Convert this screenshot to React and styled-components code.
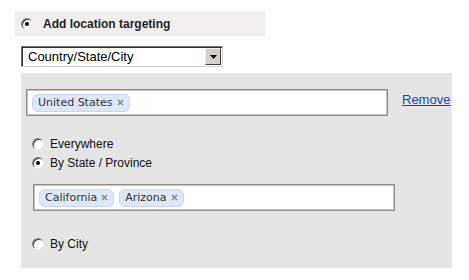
import React from 'react';
import styled, { createGlobalStyle } from 'styled-components';

const GlobalStyle = createGlobalStyle`
    body {
        margin: 0;
        background: #fff;
        font-family: 'Liberation Sans', Arial, sans-serif;
        color: #222;
    }
`;

const Page = styled.div`
    padding: 11px 0 0 15px;
`;

const HeaderBar = styled.div`
    width: 244px;
    height: 25px;
    padding-left: 6px;
    background: #f0efed;
    display: flex;
    align-items: center;
    gap: 10px;
    font-size: 12px;
    font-weight: bold;
    color: #1f1f2e;
`;

const RadioDot = styled.span`
    position: relative;
    flex: none;
    box-sizing: border-box;
    width: 12px;
    height: 12px;
    border-radius: 50%;
    background: #fff;
    border: 1px solid;
    border-color: #808080 #e8e8e8 #e8e8e8 #808080;
    box-shadow: inset 1px 1px 0 #404040;

    &::after {
        content: '';
        display: ${(p) => (p.checked ? 'block' : 'none')};
        position: absolute;
        left: 3px;
        top: 3px;
        width: 4px;
        height: 4px;
        border-radius: 50%;
        background: #000;
    }
`;

const Select = styled.div`
    margin: 10px 0 0 6px;
    width: 202px;
    height: 21px;
    box-sizing: border-box;
    background: #fff;
    border: 1px solid;
    border-color: #707070 #d4d0c8 #d4d0c8 #707070;
    box-shadow: inset 1px 1px 0 #303030;
    display: flex;
    align-items: center;
    justify-content: space-between;
    padding: 1px 1px 1px 6px;
    font-size: 13px;
    color: #000;
`;

const DropButton = styled.span`
    width: 16px;
    height: 17px;
    box-sizing: border-box;
    background: #d4d0c8;
    border: 1px solid;
    border-color: #f4f4f4 #404040 #404040 #f4f4f4;
    display: flex;
    align-items: center;
    justify-content: center;
`;

const Panel = styled.div`
    margin: 6px 0 0 6px;
    width: 431px;
    height: 195px;
    box-sizing: border-box;
    background: #e5e5e5;
    padding: 16px 0 0 5px;
`;

const TokenRow = styled.div`
    display: flex;
    align-items: flex-start;
    gap: 14px;
`;

const TokenBox = styled.div`
    width: 362px;
    height: 27px;
    box-sizing: border-box;
    background: #fff;
    border: 1px solid #8e8e8e;
    box-shadow: inset 0 0 0 1px #c4c4c4;
    display: flex;
    align-items: center;
    gap: 5px;
    padding-left: 5px;
    margin-left: ${(p) => p.indent || 0}px;
    margin-top: ${(p) => p.top || 0}px;
`;

const Tag = styled.span`
    height: 18px;
    box-sizing: border-box;
    display: inline-flex;
    align-items: center;
    gap: 4px;
    padding: 0 5px 0 5px;
    background: #dfe8f8;
    border: 1px solid #c8d6f1;
    border-radius: 6px;
    font-family: 'DejaVu Sans', Verdana, sans-serif;
    font-size: 11px;
    color: #333;
`;

const RemoveLink = styled.a`
    margin-top: 3px;
    font-size: 13px;
    color: #1a47b8;
    text-decoration: underline;
    cursor: pointer;
`;

const Options = styled.div`
    margin: 18px 0 0 6px;
`;

const OptionRow = styled.label`
    display: flex;
    align-items: center;
    gap: 6px;
    height: 19px;
    font-size: 12px;
    color: #111;
    margin-top: ${(p) => p.top || 0}px;
`;

const CloseIcon = () => (
    <svg width="7" height="7" viewBox="0 0 7 7">
        <path d="M1 1L6 6M6 1L1 6" stroke="#8a8a8a" strokeWidth="1.6" />
    </svg>
);

const ArrowIcon = () => (
    <svg width="7" height="4" viewBox="0 0 7 4">
        <path d="M0 0H7L3.5 4Z" fill="#000" />
    </svg>
);

const Option = ({ label, checked, top }) => (
    <OptionRow top={top}>
        <RadioDot checked={checked} />
        {label}
    </OptionRow>
);

const TagItem = ({ label }) => (
    <Tag>
        {label}
        <CloseIcon />
    </Tag>
);

export default function App() {
    return (
        <Page>
            <GlobalStyle />
            <HeaderBar>
                <RadioDot checked />
                Add location targeting
            </HeaderBar>

            <Select>
                Country/State/City
                <DropButton>
                    <ArrowIcon />
                </DropButton>
            </Select>

            <Panel>
                <TokenRow>
                    <TokenBox>
                        <TagItem label="United States" />
                    </TokenBox>
                    <RemoveLink>Remove</RemoveLink>
                </TokenRow>

                <Options>
                    <Option label="Everywhere" />
                    <Option label="By State / Province" checked />
                    <TokenBox indent={1} top={12}>
                        <TagItem label="California" />
                        <TagItem label="Arizona" />
                    </TokenBox>
                    <Option label="By City" top={23} />
                </Options>
            </Panel>
        </Page>
    );
}
